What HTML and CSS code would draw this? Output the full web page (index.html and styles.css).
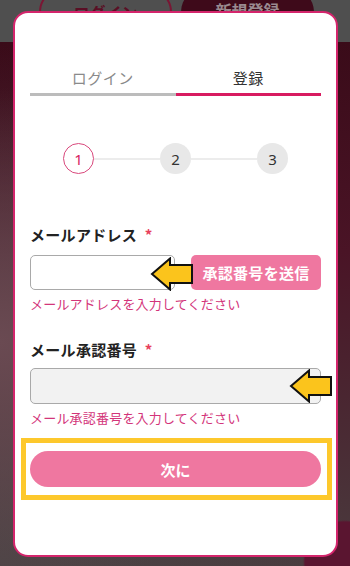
FILE: index.html
```html
<!DOCTYPE html>
<html lang="ja">
<head>
<meta charset="utf-8">
<title>登録</title>
<link rel="stylesheet" href="styles.css">
</head>
<body>
<div class="page">
  <div class="topbar">
    <div class="pill pill-outline">ログイン</div>
    <div class="pill pill-fill">新規登録</div>
  </div>
  <div class="hero"></div>
</div>

<div class="modal">
  <div class="tabs">
    <div class="tab">ログイン</div>
    <div class="tab tab-active">登録</div>
  </div>

  <div class="stepper">
    <div class="step step-current">1</div>
    <div class="step-line"></div>
    <div class="step">2</div>
    <div class="step-line"></div>
    <div class="step">3</div>
  </div>

  <div class="label label-first">メールアドレス <span class="req">*</span></div>
  <div class="row">
    <div class="input"></div>
    <div class="send-btn">承認番号を送信</div>
    <svg class="arrow arrow-one" viewBox="0 0 44 34" width="44" height="34"><polygon points="2,17 20,1.5 20,8 42,8 42,26 20,26 20,32.5" fill="#fbc41c" stroke="#111" stroke-width="2" stroke-linejoin="miter"/></svg>
  </div>
  <div class="error">メールアドレスを入力してください</div>

  <div class="label label-second">メール承認番号 <span class="req">*</span></div>
  <div class="row">
    <div class="input input-full"></div>
    <svg class="arrow arrow-two" viewBox="0 0 44 34" width="44" height="34"><polygon points="2,17 20,1.5 20,8 42,8 42,26 20,26 20,32.5" fill="#fbc41c" stroke="#111" stroke-width="2" stroke-linejoin="miter"/></svg>
  </div>
  <div class="error">メール承認番号を入力してください</div>

  <div class="highlight">
    <div class="next-btn">次に</div>
  </div>
</div>
</body>
</html>
```

FILE: styles.css
```css
html, body {
  margin: 0;
  padding: 0;
  width: 350px;
  height: 566px;
  overflow: hidden;
  font-family: "Noto Sans CJK JP", "Noto Sans", sans-serif;
}

.page {
  width: 350px;
  height: 566px;
  display: flex;
  flex-direction: column;
}

.topbar {
  height: 42px;
  background: #4f4f4f;
  display: flex;
  gap: 9px;
  padding-left: 39px;
  box-sizing: border-box;
}

.pill {
  margin-top: -12px;
  height: 48px;
  border-radius: 24px;
  box-sizing: border-box;
  display: flex;
  justify-content: center;
  padding-top: 12px;
  font-size: 16px;
  font-weight: bold;
  line-height: 20px;
}

.pill-outline {
  width: 133px;
  border: 2px solid #7a1634;
  color: #5a0f25;
}

.pill-fill {
  width: 133px;
  background: #3e0a1a;
  color: #9a8a90;
}

.hero {
  flex: 1;
  background:
    radial-gradient(circle at 345px 520px, #5a1530 0, #5a1530 40px, transparent 42px),
    radial-gradient(ellipse at 0 300px, #6a4a52 0, transparent 60%),
    radial-gradient(ellipse at 0 520px, #4b4445 0, transparent 70%),
    linear-gradient(180deg, #3a0b19 0%, #4a1426 40%, #4a3b3e 100%);
}

.modal {
  position: absolute;
  left: 13px;
  top: 11px;
  width: 325px;
  height: 546px;
  box-sizing: border-box;
  background: #fff;
  border: 2px solid #d4256c;
  border-radius: 15px;
  padding: 55px 15px 0 15px;
}

.tabs {
  display: flex;
}

.tab {
  flex: 1;
  text-align: center;
  font-size: 15px;
  line-height: 20px;
  color: #8a8a8a;
  padding-bottom: 5px;
  border-bottom: 3px solid #bcbcbc;
  letter-spacing: 0.5px;
}

.tab-active {
  color: #333;
  border-bottom-color: #d81b60;
}

.stepper {
  margin-top: 47px;
  display: flex;
  align-items: center;
  justify-content: center;
}

.step {
  width: 31px;
  height: 31px;
  border-radius: 50%;
  background: #e8e8e8;
  color: #333;
  font-size: 15px;
  display: flex;
  align-items: center;
  justify-content: center;
  box-sizing: border-box;
  font-family: "Noto Sans", sans-serif;
}

.step-current {
  background: #fff;
  border: 1px solid #d9487c;
  color: #d81b60;
}

.step-line {
  width: 66px;
  height: 2px;
  background: #ececec;
}

.label {
  font-size: 15px;
  line-height: 20px;
  font-weight: bold;
  color: #222;
  letter-spacing: 0.3px;
}

.label-first {
  margin-top: 51px;
}

.label-second {
  margin-top: 27px;
}

.req {
  color: #e8415c;
  margin-left: 4px;
}

.row {
  position: relative;
  display: flex;
  gap: 16px;
  margin-top: 10px;
}

.label-second + .row {
  margin-top: 8px;
}

.input {
  width: 145px;
  height: 35px;
  box-sizing: border-box;
  border: 1px solid #a9a9a9;
  border-radius: 5px;
  background: #fff;
}

.input-full {
  width: 292px;
  height: 36px;
  background: #f2f2f2;
}

.send-btn {
  flex: 1;
  height: 35px;
  background: #ef77a0;
  color: #fff;
  border-radius: 5px;
  font-size: 15px;
  font-weight: bold;
  display: flex;
  align-items: center;
  justify-content: center;
  letter-spacing: 0.3px;
}

.arrow {
  position: absolute;
  top: 2px;
}

.arrow-one {
  left: 120px;
}

.arrow-two {
  left: 259px;
  top: 1px;
}

.error {
  margin-top: 5px;
  font-size: 13px;
  line-height: 18px;
  color: #d3357a;
  letter-spacing: 0.2px;
}

.highlight {
  margin: 11px -11px 0 -9px;
  border: 5px solid #fdc82c;
  padding: 8px 6px 8px 4px;
}

.next-btn {
  height: 36px;
  border-radius: 18px;
  background: #ef77a0;
  color: #fff;
  font-size: 15px;
  font-weight: bold;
  display: flex;
  align-items: center;
  justify-content: center;
}
```
